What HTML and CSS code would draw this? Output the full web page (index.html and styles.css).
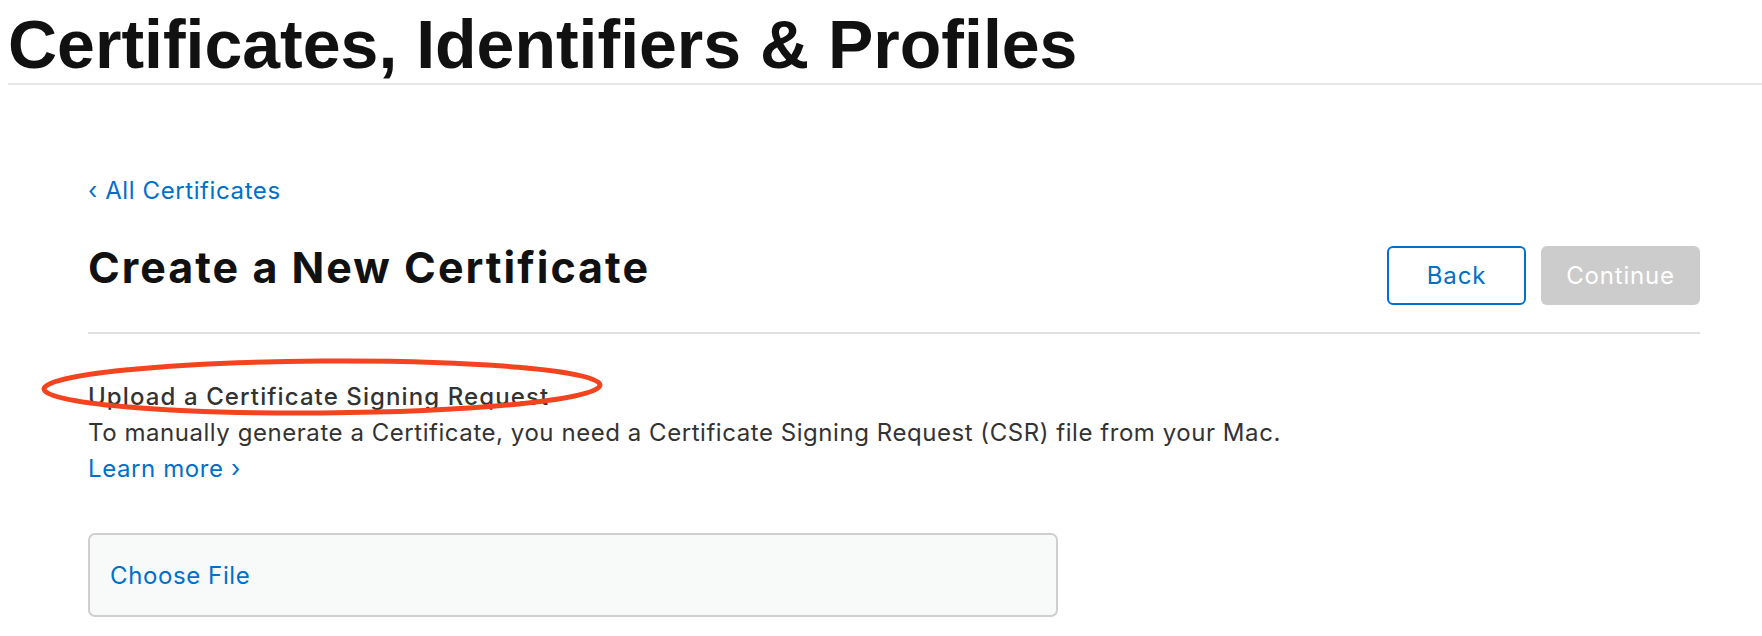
FILE: index.html
```html
<!DOCTYPE html>
<html lang="en">
<head>
<meta charset="utf-8">
<title>Certificates, Identifiers &amp; Profiles</title>
<link rel="stylesheet" href="styles.css">
</head>
<body>
<header class="site-header">
  <h1 class="site-title">Certificates, Identifiers &amp; Profiles</h1>
</header>
<main class="content">
  <a class="back-link" href="#"><span class="chev">‹</span> All Certificates</a>
  <div class="title-row">
    <h2 class="page-title">Create a New Certificate</h2>
    <div class="actions">
      <button class="btn btn-back" type="button">Back</button>
      <button class="btn btn-continue" type="button" disabled>Continue</button>
    </div>
  </div>
  <section class="upload">
    <svg class="annotation" width="580" height="80" viewBox="0 0 580 80" aria-hidden="true">
      <ellipse cx="290" cy="40" rx="278" ry="26" fill="none" stroke="#f4431f" stroke-width="5" transform="rotate(-0.4 290 40)"/>
    </svg>
    <h3 class="upload-title">Upload a Certificate Signing Request</h3>
    <p class="upload-desc">To manually generate a Certificate, you need a Certificate Signing Request (CSR) file from your Mac.</p>
    <a class="learn-more" href="#">Learn more ›</a>
    <div class="file-box">
      <span class="choose-file">Choose File</span>
    </div>
  </section>
</main>
</body>
</html>
```

FILE: styles.css
```css
* { box-sizing: border-box; }

html, body {
  margin: 0;
  padding: 0;
  background: #ffffff;
}

body {
  font-family: Inter, "Noto Sans", sans-serif;
  color: #333333;
}

.site-header {
  margin-left: 8px;
  padding-top: 11px;
  padding-bottom: 5px;
  border-bottom: 2px solid #e6e6e6;
}

.site-title {
  margin: 0;
  font-family: "Liberation Sans", Arial, sans-serif;
  font-weight: 700;
  font-size: 68px;
  line-height: 67px;
  color: #111111;
}

.content {
  width: 1612px;
  margin-left: 88px;
  padding-top: 91px;
}

.back-link {
  display: block;
  font-size: 24px;
  line-height: 30px;
  letter-spacing: 0.6px;
  color: #0070c9;
  text-decoration: none;
}

.title-row {
  display: flex;
  justify-content: space-between;
  align-items: flex-start;
  margin-top: 37px;
  padding-bottom: 27px;
  border-bottom: 2px solid #e0e0e0;
}

.page-title {
  margin: 0;
  font-size: 43px;
  line-height: 48px;
  font-weight: 700;
  letter-spacing: 2px;
  color: #111111;
}

.actions {
  display: flex;
  gap: 15px;
  margin-top: 3px;
}

.btn {
  height: 59px;
  border-radius: 6px;
  font-family: Inter, "Noto Sans", sans-serif;
  font-size: 24px;
  letter-spacing: 0.8px;
  padding: 0;
}

.btn-back {
  width: 139px;
  background: #ffffff;
  border: 2px solid #0070c9;
  color: #0070c9;
}

.btn-continue {
  width: 159px;
  background: #cccccc;
  border: 0;
  color: #ffffff;
}

.upload {
  position: relative;
  padding-top: 45px;
}

.annotation {
  position: absolute;
  left: -56px;
  top: 13px;
  overflow: visible;
}

.upload-title {
  margin: 0;
  font-size: 24px;
  line-height: 36px;
  font-weight: 500;
  letter-spacing: 1.1px;
  color: #333333;
}

.upload-desc {
  margin: 0;
  font-size: 24px;
  line-height: 36px;
  letter-spacing: 0.55px;
  color: #333333;
}

.learn-more {
  display: block;
  font-size: 24px;
  line-height: 36px;
  letter-spacing: 0.6px;
  color: #0070c9;
  text-decoration: none;
}

.file-box {
  display: flex;
  align-items: center;
  width: 970px;
  height: 84px;
  margin-top: 46px;
  padding-left: 20px;
  background: #f8f9f9;
  border: 2px solid #cfcfcf;
  border-radius: 7px;
}

.choose-file {
  font-size: 24px;
  letter-spacing: 0.6px;
  color: #0070c9;
}
```
